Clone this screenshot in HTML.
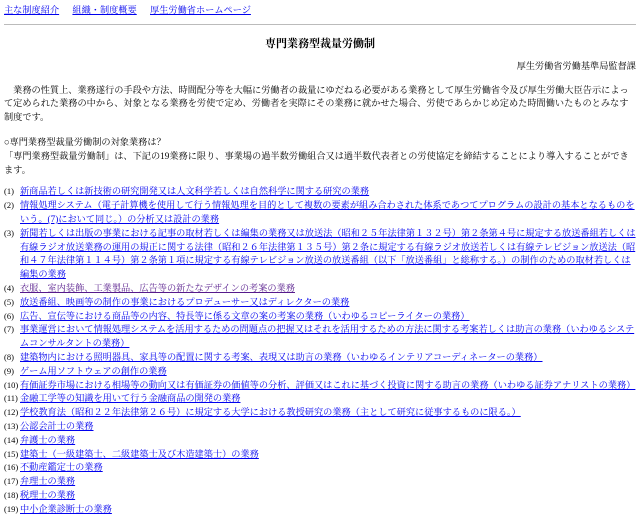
<!DOCTYPE html>
<html><head><meta charset="utf-8"><style>
body{margin:0;padding:4px 4px 0 4px;font-family:"Liberation Serif","Noto Serif CJK SC",serif;font-size:9.2px;line-height:13.8px;color:#000;background:#fff;width:632px;overflow:hidden}
a{color:#00e}
.nav{margin-top:0}
.nav a{margin-right:11px}
hr{border:0;border-top:1px solid #bbb;margin:6px 0 0 0}
h1{font-size:11px;text-align:center;margin:11px 0 0 0;line-height:16px}
.r{text-align:right;margin-top:8px}
p{margin:10px 0 0 0}
.it{display:flex;margin-top:0}
.n{flex:0 0 auto;min-width:16px;font-size:8.5px}
.it a{flex:1}
.v{color:#551a8b}
</style></head><body>
<div class="nav"><a href="#">主な制度紹介</a> <a href="#">組織・制度概要</a> <a href="#">厚生労働省ホームページ</a></div>
<hr>
<h1>専門業務型裁量労働制</h1>
<div class="r">厚生労働省労働基準局監督課</div>
<p>&#12288;業務の性質上、業務遂行の手段や方法、時間配分等を大幅に労働者の裁量にゆだねる必要がある業務として厚生労働省令及び厚生労働大臣告示によって定められた業務の中から、対象となる業務を労使で定め、労働者を実際にその業務に就かせた場合、労使であらかじめ定めた時間働いたものとみなす制度です。</p>
<p style="margin-top:11px">○専門業務型裁量労働制の対象業務は？<br>「専門業務型裁量労働制」は、下記の19業務に限り、事業場の過半数労働組合又は過半数代表者との労使協定を締結することにより導入することができます。</p>
<div style="height:8px"></div>
<div class="it"><span class="n">(1)</span><a href="#">新商品若しくは新技術の研究開発又は人文科学若しくは自然科学に関する研究の業務</a></div>
<div class="it"><span class="n">(2)</span><a href="#">情報処理システム（電子計算機を使用して行う情報処理を目的として複数の要素が組み合わされた体系であつてプログラムの設計の基本となるものをいう。(7)において同じ。）の分析又は設計の業務</a></div>
<div class="it"><span class="n">(3)</span><a href="#">新聞若しくは出版の事業における記事の取材若しくは編集の業務又は放送法（昭和２５年法律第１３２号）第２条第４号に規定する放送番組若しくは有線ラジオ放送業務の運用の規正に関する法律（昭和２６年法律第１３５号）第２条に規定する有線ラジオ放送若しくは有線テレビジョン放送法（昭和４７年法律第１１４号）第２条第１項に規定する有線テレビジョン放送の放送番組（以下「放送番組」と総称する。）の制作のための取材若しくは編集の業務</a></div>
<div class="it"><span class="n">(4)</span><a href="#" class="v">衣服、室内装飾、工業製品、広告等の新たなデザインの考案の業務</a></div>
<div class="it"><span class="n">(5)</span><a href="#">放送番組、映画等の制作の事業におけるプロデューサー又はディレクターの業務</a></div>
<div class="it"><span class="n">(6)</span><a href="#">広告、宣伝等における商品等の内容、特長等に係る文章の案の考案の業務（いわゆるコピーライターの業務）</a></div>
<div class="it"><span class="n">(7)</span><a href="#">事業運営において情報処理システムを活用するための問題点の把握又はそれを活用するための方法に関する考案若しくは助言の業務（いわゆるシステムコンサルタントの業務）</a></div>
<div class="it"><span class="n">(8)</span><a href="#">建築物内における照明器具、家具等の配置に関する考案、表現又は助言の業務（いわゆるインテリアコーディネーターの業務）</a></div>
<div class="it"><span class="n">(9)</span><a href="#">ゲーム用ソフトウェアの創作の業務</a></div>
<div class="it"><span class="n">(10)</span><a href="#">有価証券市場における相場等の動向又は有価証券の価値等の分析、評価又はこれに基づく投資に関する助言の業務（いわゆる証券アナリストの業務）</a></div>
<div class="it"><span class="n">(11)</span><a href="#">金融工学等の知識を用いて行う金融商品の開発の業務</a></div>
<div class="it"><span class="n">(12)</span><a href="#">学校教育法（昭和２２年法律第２６号）に規定する大学における教授研究の業務（主として研究に従事するものに限る。）</a></div>
<div class="it"><span class="n">(13)</span><a href="#">公認会計士の業務</a></div>
<div class="it"><span class="n">(14)</span><a href="#">弁護士の業務</a></div>
<div class="it"><span class="n">(15)</span><a href="#">建築士（一級建築士、二級建築士及び木造建築士）の業務</a></div>
<div class="it"><span class="n">(16)</span><a href="#">不動産鑑定士の業務</a></div>
<div class="it"><span class="n">(17)</span><a href="#">弁理士の業務</a></div>
<div class="it"><span class="n">(18)</span><a href="#">税理士の業務</a></div>
<div class="it"><span class="n">(19)</span><a href="#">中小企業診断士の業務</a></div>
</body></html>
